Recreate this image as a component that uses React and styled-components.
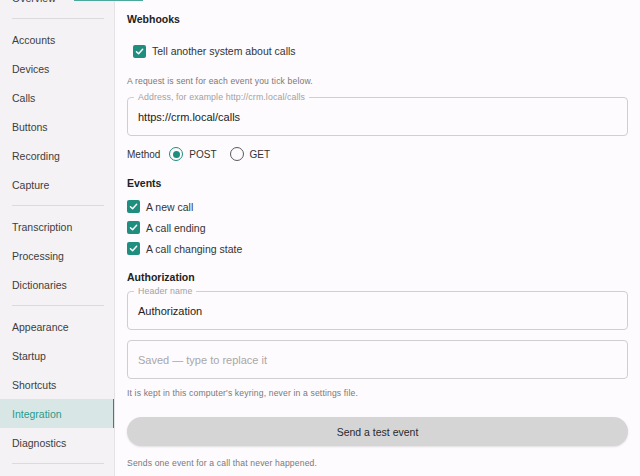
import React, { useLayoutEffect, useRef } from 'react';
import styled, { createGlobalStyle } from 'styled-components';

const GlobalStyle = createGlobalStyle`
  html, body {
    margin: 0;
    padding: 0;
    background: #fdfbfd;
    font-family: "Liberation Sans", Arial, sans-serif;
    color: #2b2b2b;
  }
  * { box-sizing: border-box; }
`;

const TEAL = '#1f8e7e';

const Frame = styled.div`
  position: relative;
  display: grid;
  grid-template-columns: 115px 1fr;
  height: 100vh;
  overflow: hidden;
`;

const TopMark = styled.div`
  position: absolute;
  top: 0;
  left: 74px;
  width: 69px;
  height: 1px;
  background: #4aa99b;
`;

const Sidebar = styled.nav`
  background: #f4f2f4;
  border-right: 1px solid #e4e2e4;
  overflow: hidden;
  padding: 8px 0 40px;
`;

const NavItem = styled.div`
  height: 29px;
  display: flex;
  align-items: center;
  padding-left: 12px;
  font-size: 10.5px;
  color: ${p => (p.$active ? '#2a9a8b' : '#3d3d3d')};
  background: ${p => (p.$active ? '#d8e7e5' : 'transparent')};
  border-right: 2px solid ${p => (p.$active ? TEAL : 'transparent')};
  margin-right: -1px;
`;

const NavDivider = styled.div`
  height: 1px;
  margin: 6px 10px 6px 12px;
  background: #dcdadc;
`;

const Main = styled.main`
  display: flex;
  flex-direction: column;
  padding: 12px 12px 0 12px;
`;

const Heading = styled.div`
  font-size: 10.5px;
  font-weight: 700;
  line-height: 14px;
  color: #222;
  margin-top: ${p => p.$mt || 0}px;
`;

const CheckRow = styled.label`
  display: flex;
  align-items: center;
  gap: 6px;
  height: ${p => p.$h || 21}px;
  padding-left: ${p => p.$indent || 0}px;
  margin-top: ${p => p.$mt || 0}px;
  font-size: 10.5px;
  color: #333;
`;

const Box = styled.span`
  width: 13px;
  height: 13px;
  border-radius: 2px;
  background: ${TEAL};
  display: inline-flex;
  align-items: center;
  justify-content: center;
  flex: none;
`;

const Help = styled.div`
  font-size: 8.6px;
  line-height: 12px;
  letter-spacing: 0.15px;
  color: #7a787a;
  margin-top: ${p => p.$mt || 0}px;
`;

const Field = styled.div`
  position: relative;
  height: 39px;
  border: 1px solid #d0cfd0;
  border-radius: 4px;
  display: flex;
  align-items: center;
  padding-left: 10px;
  margin-top: ${p => p.$mt || 0}px;
  background: #fdfbfd;
`;

const Legend = styled.span`
  position: absolute;
  top: -7px;
  left: 6px;
  padding: 0 4px;
  background: #fdfbfd;
  font-size: 8.8px;
  line-height: 12px;
  letter-spacing: 0.1px;
  color: #a3a1a3;
`;

const Value = styled.span`
  font-size: 11px;
  color: ${p => (p.$placeholder ? '#a9a7a9' : '#222')};
`;

const MethodRow = styled.div`
  display: flex;
  align-items: center;
  height: 18px;
  margin-top: 9px;
  font-size: 10px;
  color: #333;
`;

const MethodLabel = styled.span`
  margin-right: 9px;
`;

const Radio = styled.span`
  width: 14px;
  height: 14px;
  border-radius: 50%;
  border: 1.5px solid ${p => (p.$on ? TEAL : '#5a5a5a')};
  display: inline-flex;
  align-items: center;
  justify-content: center;
  margin-right: 6px;
  &::after {
    content: '';
    width: 7px;
    height: 7px;
    border-radius: 50%;
    background: ${p => (p.$on ? TEAL : 'transparent')};
  }
`;

const RadioText = styled.span`
  margin-right: ${p => p.$mr || 0}px;
`;

const Button = styled.button`
  margin-top: 18px;
  height: 29px;
  border: none;
  border-radius: 15px;
  background: #d6d5d6;
  box-shadow: 0 1px 2px rgba(0, 0, 0, 0.12);
  font-family: inherit;
  font-size: 10.5px;
  font-weight: 500;
  color: #2a2a2a;
`;

const Check = () => (
  <svg width="9" height="9" viewBox="0 0 10 10">
    <path d="M1.6 5.2 L4 7.5 L8.5 2.6" fill="none" stroke="#fff" strokeWidth="1.6" strokeLinecap="round" strokeLinejoin="round" />
  </svg>
);

const groups = [
  ['Overview'],
  ['Accounts', 'Devices', 'Calls', 'Buttons', 'Recording', 'Capture'],
  ['Transcription', 'Processing', 'Dictionaries'],
  ['Appearance', 'Startup', 'Shortcuts', 'Integration', 'Diagnostics'],
];

export default function App() {
  const nav = useRef(null);
  useLayoutEffect(() => {
    if (nav.current) nav.current.scrollTop = 25;
  }, []);

  return (
    <>
      <GlobalStyle />
      <Frame>
        <Sidebar ref={nav}>
          {groups.map((g, i) => (
            <React.Fragment key={i}>
              {i > 0 && <NavDivider />}
              {g.map(name => (
                <NavItem key={name} $active={name === 'Integration'}>{name}</NavItem>
              ))}
            </React.Fragment>
          ))}
          <NavDivider />
        </Sidebar>
        <Main>
          <Heading>Webhooks</Heading>
          <CheckRow $mt={15} $h={20} $indent={6}>
            <Box><Check /></Box>
            Tell another system about calls
          </CheckRow>
          <Help $mt={14}>A request is sent for each event you tick below.</Help>
          <Field $mt={10}>
            <Legend>Address, for example http://crm.local/calls</Legend>
            <Value>https://crm.local/calls</Value>
          </Field>
          <MethodRow>
            <MethodLabel>Method</MethodLabel>
            <Radio $on />
            <RadioText $mr={13}>POST</RadioText>
            <Radio />
            <RadioText>GET</RadioText>
          </MethodRow>
          <Heading $mt={13}>Events</Heading>
          <CheckRow $mt={6}><Box><Check /></Box>A new call</CheckRow>
          <CheckRow><Box><Check /></Box>A call ending</CheckRow>
          <CheckRow><Box><Check /></Box>A call changing state</CheckRow>
          <Heading $mt={11}>Authorization</Heading>
          <Field $mt={7}>
            <Legend>Header name</Legend>
            <Value>Authorization</Value>
          </Field>
          <Field $mt={10}>
            <Value $placeholder>Saved — type to replace it</Value>
          </Field>
          <Help $mt={8}>It is kept in this computer's keyring, never in a settings file.</Help>
          <Button>Send a test event</Button>
          <Help $mt={11}>Sends one event for a call that never happened.</Help>
        </Main>
        <TopMark />
      </Frame>
    </>
  );
}
